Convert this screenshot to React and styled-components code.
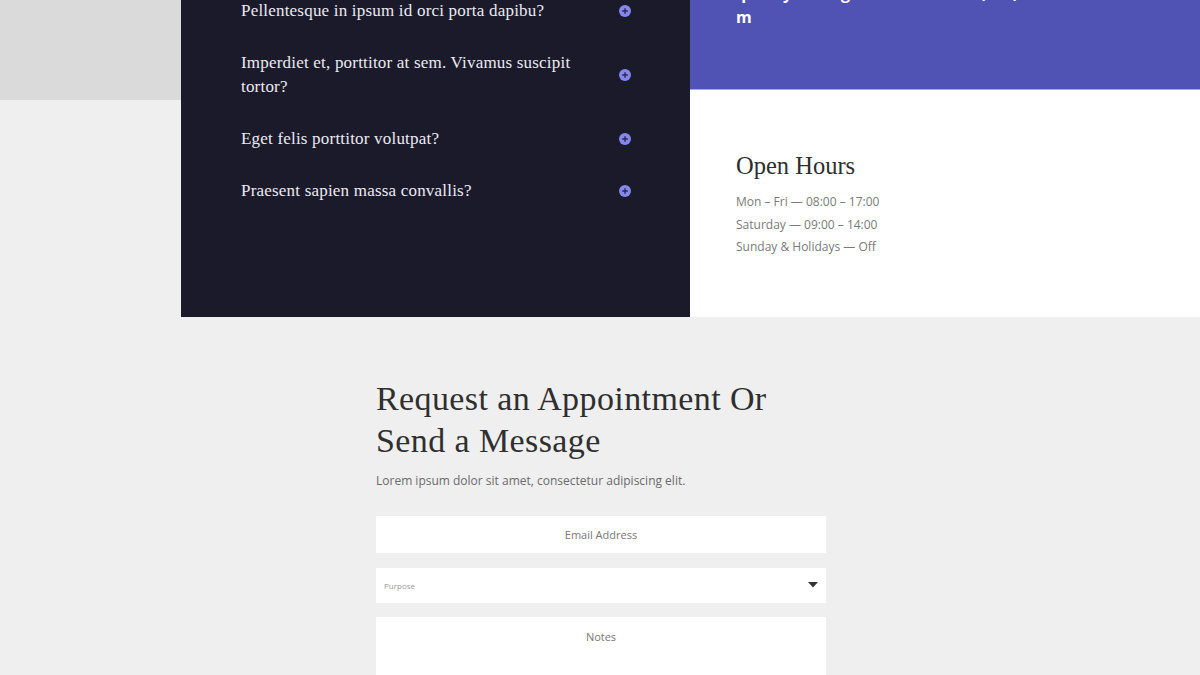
import React from "react";
import styled, { createGlobalStyle } from "styled-components";

const GlobalStyle = createGlobalStyle`
  html, body {
    margin: 0;
    padding: 0;
    background: #efefef;
    overflow: hidden;
  }
  * {
    box-sizing: border-box;
  }
`;

const Page = styled.div`
  margin-top: -119px;
`;

const TopSection = styled.section`
  display: grid;
  grid-template-columns: 181px 509px 1fr;
  background: linear-gradient(to bottom, #dadada 219px, #efefef 219px);
`;

const Spacer = styled.div``;

const FaqPanel = styled.div`
  background: #1b1a2b;
  padding: 118px 59px 114px 60px;
  display: flex;
  flex-direction: column;
  gap: 28px;
`;

const FaqItem = styled.div`
  display: flex;
  align-items: center;
  justify-content: space-between;
  gap: 40px;
`;

const Question = styled.p`
  margin: 0;
  flex: 1;
  font-family: "Liberation Serif", "DejaVu Serif", serif;
  font-size: 17px;
  letter-spacing: 0.2px;
  line-height: 24px;
  color: #ebeaf1;
`;

const RightColumn = styled.div`
  display: flex;
  flex-direction: column;
`;

const ContactBar = styled.div`
  height: 209px;
  background: #5153b4;
  border-bottom: 1px solid #a5a8e4;
  padding: 0 40px 60px 46px;
  display: grid;
  grid-template-columns: 186px 1fr;
  column-gap: 58px;
  align-items: end;
`;

const ContactText = styled.div`
  font-family: "Open Sans", "Liberation Sans", sans-serif;
  font-weight: 700;
  font-size: 16px;
  line-height: 24px;
  color: #ffffff;
  overflow-wrap: anywhere;
`;

const HoursCard = styled.div`
  flex: 1;
  background: #ffffff;
  padding: 61px 46px 40px;
`;

const CardTitle = styled.h3`
  margin: 0;
  font-family: "Liberation Serif", "DejaVu Serif", serif;
  font-weight: 400;
  font-size: 24.5px;
  line-height: 30px;
  color: #2e2e2e;
`;

const HoursList = styled.ul`
  list-style: none;
  margin: 10px 0 0;
  padding: 0;
`;

const HoursRow = styled.li`
  font-family: "Open Sans", "Liberation Sans", sans-serif;
  font-size: 12px;
  line-height: 22.5px;
  color: #7a7a7a;
`;

const FormSection = styled.section`
  display: flex;
  justify-content: center;
  padding: 61px 0 40px 2px;
`;

const FormColumn = styled.div`
  width: 450px;
  display: flex;
  flex-direction: column;
`;

const Heading = styled.h2`
  margin: 0;
  font-family: "Liberation Serif", "DejaVu Serif", serif;
  font-weight: 400;
  font-size: 34px;
  letter-spacing: 0.4px;
  line-height: 42px;
  color: #2f2f2f;
`;

const Lead = styled.p`
  margin: 9px 0 25px;
  font-family: "Open Sans", "Liberation Sans", sans-serif;
  font-size: 12px;
  line-height: 20px;
  color: #6b6b6b;
`;

const Form = styled.form`
  display: flex;
  flex-direction: column;
  gap: 14.5px;
`;

const Field = styled.input`
  height: 37px;
  border: none;
  background: #ffffff;
  font-family: "Open Sans", "Liberation Sans", sans-serif;
  font-size: 11px;
  text-align: center;
  color: #333;
  outline: none;
  &::placeholder {
    color: #777;
  }
`;

const SelectBox = styled.div`
  height: 35px;
  background: #ffffff;
  display: flex;
  align-items: center;
  justify-content: space-between;
  padding: 0 8px;
`;

const SelectLabel = styled.span`
  font-family: "Open Sans", "Liberation Sans", sans-serif;
  font-size: 8px;
  color: #9a9a9a;
`;

const Notes = styled.textarea`
  height: 110px;
  border: none;
  resize: none;
  background: #ffffff;
  padding-top: 12px;
  font-family: "Open Sans", "Liberation Sans", sans-serif;
  font-size: 11px;
  text-align: center;
  outline: none;
  &::placeholder {
    color: #777;
  }
`;

const PlusIcon = () => (
  <svg width="12" height="12" viewBox="0 0 12 12" aria-hidden="true">
    <circle cx="6" cy="6" r="6" fill="#8587ec" />
    <path d="M3.2 6h5.6M6 3.2v5.6" stroke="#2a2a5a" strokeWidth="1.4" />
  </svg>
);

const Caret = () => (
  <svg width="10" height="6" viewBox="0 0 10 6" aria-hidden="true">
    <path d="M0 0h10L5 5.5z" fill="#333" />
  </svg>
);

const questions = [
  "Pellentesque in ipsum id orci porta dapibu?",
  "Imperdiet et, porttitor at sem. Vivamus suscipit tortor?",
  "Eget felis porttitor volutpat?",
  "Praesent sapien massa convallis?",
];

const hours = [
  "Mon – Fri — 08:00 – 17:00",
  "Saturday — 09:00 – 14:00",
  "Sunday & Holidays — Off",
];

export default function App() {
  return (
    <>
      <GlobalStyle />
      <Page>
        <TopSection>
          <Spacer />
          <FaqPanel>
            {questions.map((q) => (
              <FaqItem key={q}>
                <Question>{q}</Question>
                <PlusIcon />
              </FaqItem>
            ))}
          </FaqPanel>
          <RightColumn>
            <ContactBar>
              <ContactText>qualitycare@gmail.com</ContactText>
              <ContactText>
                <div>(800) 123 4567</div>
                <div>&nbsp;</div>
              </ContactText>
            </ContactBar>
            <HoursCard>
              <CardTitle>Open Hours</CardTitle>
              <HoursList>
                {hours.map((h) => (
                  <HoursRow key={h}>{h}</HoursRow>
                ))}
              </HoursList>
            </HoursCard>
          </RightColumn>
        </TopSection>
        <FormSection>
          <FormColumn>
            <Heading>
              Request an Appointment Or
              <br />
              Send a Message
            </Heading>
            <Lead>Lorem ipsum dolor sit amet, consectetur adipiscing elit.</Lead>
            <Form onSubmit={(e) => e.preventDefault()}>
              <Field type="email" placeholder="Email Address" />
              <SelectBox>
                <SelectLabel>Purpose</SelectLabel>
                <Caret />
              </SelectBox>
              <Notes placeholder="Notes" />
            </Form>
          </FormColumn>
        </FormSection>
      </Page>
    </>
  );
}
